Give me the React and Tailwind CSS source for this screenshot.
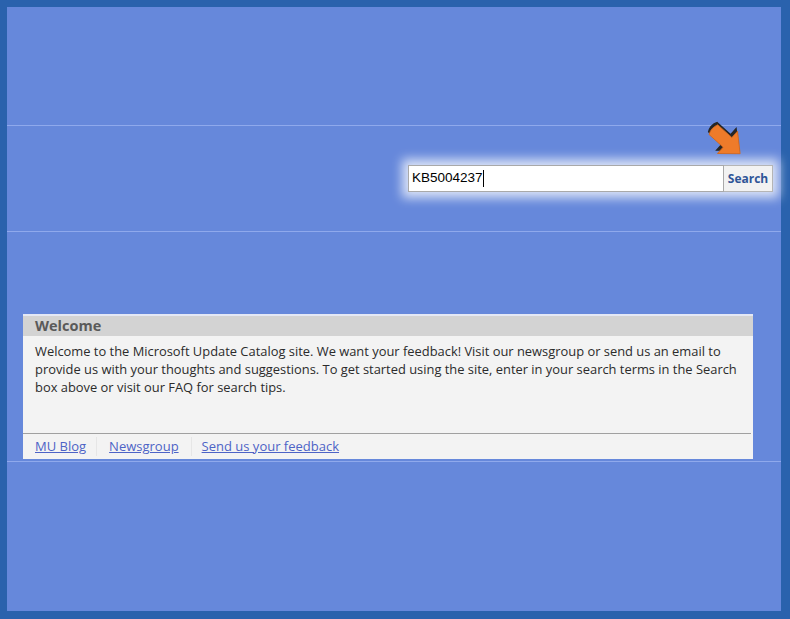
import { useState } from 'react'

function Arrow() {
  return (
    <svg width="46" height="46" viewBox="0 0 46 46" className="absolute right-[32px] top-[-8px]">
      <g transform="rotate(42 23 23)">
        <path d="M6 16 L24 16 L24 7 L42 23 L24 39 L24 30 L6 30 Q2 23 6 16 Z" fill="#262626" transform="translate(-2.5 -1.5)" strokeLinejoin="round" />
        <path d="M6 16.5 L25 16.5 L25 8 L42 23 L25 38 L25 29.5 L6 29.5 Q3 23 6 16.5 Z" fill="#ee7b2a" stroke="#d2661c" strokeWidth="0.8" strokeLinejoin="round" />
      </g>
    </svg>
  )
}

export default function App() {
  const [query] = useState('KB5004237')

  return (
    <div className="w-[790px] h-[619px] bg-[#2a62ad] pl-[7px] pt-[7px] pr-[9px] pb-[8px]">
      <div className="h-full bg-[#6688db] flex flex-col">
        <div className="h-[118px]" />
        <div className="h-px bg-[#8fa9ec]" />
        <div className="h-[105px] flex justify-end items-start pt-[39px] pr-[8px] relative">
          <Arrow />
          <div className="flex shadow-[0_0_10px_6px_rgba(255,255,255,0.75)]">
            <div className="w-[316px] h-[27px] bg-white border border-[#a9a9a9] flex items-center pl-[3px] text-[13.5px] text-black" style={{ fontFamily: '"Liberation Sans", Arial, sans-serif' }}>
              <span>{query}</span>
              <span className="w-px h-[17px] bg-black" />
            </div>
            <button className="w-[49px] h-[27px] bg-[#f2f2f2] border border-l-0 border-[#b5b5b5] text-[12px] font-bold text-[#2f5597]" style={{ fontFamily: '"Open Sans", sans-serif' }}>
              Search
            </button>
          </div>
        </div>
        <div className="h-px bg-[#8fa9ec]" />
        <div className="h-[229px] pt-[82px] pl-[16px] pr-[28px]">
          <div className="h-[145px] bg-[#f3f3f3] border-t-2 border-[#e4e8f5] flex flex-col" style={{ fontFamily: '"Open Sans", sans-serif' }}>
            <div className="h-[20px] bg-[#d3d3d3] pl-[12px] flex items-center text-[14.5px] font-bold text-[#5a5a5a]">Welcome</div>
            <p className="pl-[12px] pr-[2px] pt-[6px] text-[12.9px] leading-[18px] text-[#2b2b2b] h-[97px]">
              Welcome to the Microsoft Update Catalog site. We want your feedback! Visit our newsgroup or send us an email to provide us with your thoughts and suggestions. To get started using the site, enter in your search terms in the Search box above or visit our FAQ for search tips.
            </p>
            <div className="h-px bg-[#a0a0a0] mr-[2px]" />
            <div className="flex items-center h-[25px] pl-[12px] text-[13px] text-[#4d63c6]">
              <a className="underline pr-[10px] border-r border-[#e6e6e6]">MU Blog</a>
              <a className="underline px-[12px] border-r border-[#e6e6e6]">Newsgroup</a>
              <a className="underline pl-[10px]">Send us your feedback</a>
            </div>
          </div>
        </div>
        <div className="h-px bg-[#8fa9ec]" />
        <div className="flex-1" />
      </div>
    </div>
  )
}
